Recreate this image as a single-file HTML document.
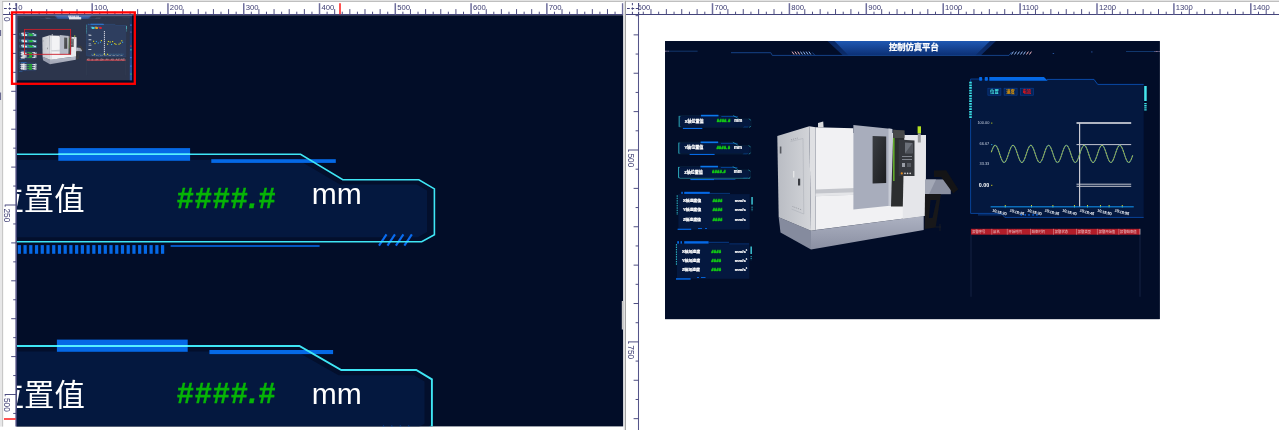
<!DOCTYPE html>
<html lang="zh-CN"><head><meta charset="utf-8"><title>控制仿真平台</title>
<style>html,body{margin:0;padding:0;background:#fff;overflow:hidden}body{width:1279px;height:430px;position:relative}svg{position:absolute;left:0;top:0;display:block;will-change:transform;transform:translateZ(0)}text{font-family:"Liberation Sans","Noto Sans CJK SC",sans-serif;white-space:pre}</style>
</head><body>
<svg width="1279" height="430" viewBox="0 0 1279 430">
<defs>
<linearGradient id="gBan" x1="0" y1="0" x2="0" y2="1"><stop offset="0" stop-color="#1f58b2"/><stop offset="1" stop-color="#0c2f74"/></linearGradient>
<linearGradient id="gBase" x1="0" y1="0" x2="0" y2="1"><stop offset="0" stop-color="#adb2c2"/><stop offset="1" stop-color="#8a8fa2"/></linearGradient>
<linearGradient id="gLeft" x1="0" y1="0" x2="1" y2="0"><stop offset="0" stop-color="#b9bcc3"/><stop offset="1" stop-color="#d3d5d9"/></linearGradient>
<linearGradient id="gWin" x1="0" y1="0" x2="1" y2="1"><stop offset="0" stop-color="#3a3d42"/><stop offset="1" stop-color="#1c1d20"/></linearGradient>
<filter id="soft" x="0" y="0" width="1" height="1" color-interpolation-filters="sRGB"><feGaussianBlur stdDeviation="0.3"/></filter>
<linearGradient id="gStrip" x1="0" y1="0" x2="0" y2="1"><stop offset="0" stop-color="#1c3058"/><stop offset="0.45" stop-color="#22407a"/><stop offset="1" stop-color="#2c5aa6"/></linearGradient>
<clipPath id="clipL"><rect x="16.6" y="15.2" width="606.7" height="411.1"/></clipPath>
<clipPath id="clipT"><rect x="16.6" y="15.3" width="115.4" height="65.3"/></clipPath>
<g id="ppb">
<polygon points="-106,154 300.6,154 342.8,179.4 418.9,179.4 434.4,188.6 434.4,234.5 421.7,241.5 -106,241.5" fill="#030f2c"/>
<polygon points="-101,159.8 298,159.8 340,184.6 416.8,184.6 427,190.6 427,232 417.8,237.3 -101,237.3" fill="#04183f"/>
<rect x="58.3" y="148.1" width="131.8" height="12.7" fill="#0569e6"/>
<rect x="211.3" y="159.2" width="124.5" height="3.7" fill="#0569e6"/>
<line x1="379" y1="245.6" x2="386.5" y2="234.3" stroke="#0a6cf0" stroke-width="2.1"/>
<line x1="387.45" y1="245.6" x2="394.95" y2="234.3" stroke="#0a6cf0" stroke-width="2.1"/>
<line x1="395.9" y1="245.6" x2="403.4" y2="234.3" stroke="#0a6cf0" stroke-width="2.1"/>
<line x1="404.35" y1="245.6" x2="411.85" y2="234.3" stroke="#0a6cf0" stroke-width="2.1"/>
</g>
<g id="ppo" transform="translate(0,0.3)">
<polygon points="-106,154 300.6,154 342.8,179.4 418.9,179.4 434.4,188.6 434.4,234.5 421.7,241.5 -106,241.5" fill="none" stroke="#3fe6f5" stroke-width="1.6" stroke-linejoin="miter"/>
<line x1="58.3" y1="154" x2="190.1" y2="154" stroke="#58efff" stroke-width="1.6"/>
</g>
<g id="pp"><use href="#ppb"/><use href="#ppo"/></g>
<g id="ppb2">
<polygon points="-106,346 299.4,346 341.25,370 416.25,370 431.9,379.4 431.9,426.2 419.4,433.2 -106,433.2" fill="#030f2c"/>
<polygon points="-101,351.6 296.8,351.6 338.5,375.2 414.2,375.2 424.5,381.4 424.5,423.8 415.4,429 -101,429" fill="#04183f"/>
<rect x="56.9" y="339.6" width="130.8" height="12.2" fill="#0569e6"/>
<rect x="209.4" y="350" width="123.7" height="4.1" fill="#0569e6"/>
<line x1="376.6" y1="437.3" x2="384.1" y2="426" stroke="#0a6cf0" stroke-width="2.1"/>
<line x1="385.05" y1="437.3" x2="392.55" y2="426" stroke="#0a6cf0" stroke-width="2.1"/>
<line x1="393.5" y1="437.3" x2="401" y2="426" stroke="#0a6cf0" stroke-width="2.1"/>
<line x1="401.95" y1="437.3" x2="409.45" y2="426" stroke="#0a6cf0" stroke-width="2.1"/>
</g>
<g id="ppo2" transform="translate(0,0)">
<polygon points="-106,346 299.4,346 341.25,370 416.25,370 431.9,379.4 431.9,426.2 419.4,433.2 -106,433.2" fill="none" stroke="#3fe6f5" stroke-width="1.9" stroke-linejoin="miter"/>
<line x1="56.9" y1="346" x2="187.7" y2="346" stroke="#58efff" stroke-width="1.9"/>
</g>
<g id="pp2"><use href="#ppb2"/><use href="#ppo2"/></g>
<g id="dash">
<rect x="0" y="0" width="494.6" height="278" fill="#020d28"/>
<polygon points="162.3,0 330.9,0 315.9,14.2 177.6,14.2" fill="#0b2a66"/>
<polygon points="169.4,0 324.9,0 310.4,14.2 183.2,14.2" fill="url(#gBan)"/>
<polyline points="65.9,11.6 105.7,11.6 107.2,14.3 149.9,14.3 343.9,14.3 346.5,11" fill="none" stroke="#1b4f9e" stroke-width="0.8"/>
<line x1="0" y1="10.1" x2="32.5" y2="10.1" stroke="#1a4a8c" stroke-width="0.7"/>
<line x1="0" y1="10.1" x2="3.5" y2="10.1" stroke="#e8a0a8" stroke-width="0.7" stroke-dasharray="0.8 0.6"/>
<line x1="460.9" y1="10.4" x2="494.6" y2="10.4" stroke="#1a4a8c" stroke-width="0.7"/>
<line x1="489.5" y1="10.4" x2="494.6" y2="10.4" stroke="#e8a0a8" stroke-width="0.7" stroke-dasharray="0.8 0.6"/>
<line x1="127" y1="10.5" x2="128.9" y2="13.4" stroke="#eeb4c0" stroke-width="1"/>
<line x1="129.8" y1="10.5" x2="131.7" y2="13.4" stroke="#eeb4c0" stroke-width="1"/>
<line x1="132.6" y1="10.5" x2="134.5" y2="13.4" stroke="#eeb4c0" stroke-width="1"/>
<line x1="135.4" y1="10.5" x2="137.3" y2="13.4" stroke="#8fb4ee" stroke-width="1"/>
<line x1="138.2" y1="10.5" x2="140.1" y2="13.4" stroke="#8fb4ee" stroke-width="1"/>
<line x1="141" y1="10.5" x2="142.9" y2="13.4" stroke="#8fb4ee" stroke-width="1"/>
<line x1="143.8" y1="10.5" x2="145.7" y2="13.4" stroke="#8fb4ee" stroke-width="1"/>
<line x1="346.4" y1="13.4" x2="348.3" y2="10.5" stroke="#8fb4ee" stroke-width="1"/>
<line x1="349.4" y1="13.4" x2="351.3" y2="10.5" stroke="#8fb4ee" stroke-width="1"/>
<line x1="352.4" y1="13.4" x2="354.3" y2="10.5" stroke="#8fb4ee" stroke-width="1"/>
<line x1="355.4" y1="13.4" x2="357.3" y2="10.5" stroke="#8fb4ee" stroke-width="1"/>
<line x1="358.4" y1="13.4" x2="360.3" y2="10.5" stroke="#8fb4ee" stroke-width="1"/>
<line x1="361.4" y1="13.4" x2="363.3" y2="10.5" stroke="#eeb4c0" stroke-width="1"/>
<line x1="364.4" y1="13.4" x2="366.3" y2="10.5" stroke="#eeb4c0" stroke-width="1"/>
<line x1="147.2" y1="11.4" x2="149.9" y2="14.3" stroke="#1b4f9e" stroke-width="0.8"/>
<rect x="387.6" y="12" width="1.4" height="0.9" fill="#2a5aa8"/>
<rect x="426" y="10.4" width="1.4" height="0.9" fill="#2a5aa8"/>
<text x="248.7" y="8.7" font-size="8.3" fill="#ffffff" font-weight="bold" text-anchor="middle" stroke="#ffffff" stroke-width="0.25">控制仿真平台</text>
<g transform="translate(0,0)">
<use href="#ppb" transform="scale(0.133227) translate(210.5,404.8)"/>
<use href="#ppo" transform="scale(0.133227) translate(210.5,404.8)" opacity="0.35"/>
<rect x="13.65" y="74.9" width="0.8" height="10.8" fill="#35c8d8"/>
<rect x="14.45" y="74.9" width="0.95" height="0.6" fill="#2a9aa8"/>
<rect x="14.45" y="85.1" width="0.95" height="0.6" fill="#2a9aa8"/>
<line x1="68" y1="74.3" x2="73.6" y2="77.7" stroke="#3fe6f5" stroke-width="0.6" opacity="0.7"/>
<line x1="83.7" y1="77.8" x2="85.8" y2="79.1" stroke="#3fe6f5" stroke-width="0.6" opacity="0.7"/>
<line x1="85.8" y1="85.2" x2="84" y2="86.3" stroke="#3fe6f5" stroke-width="0.6" opacity="0.7"/>
<text x="19.6" y="81.5" font-size="4.05" fill="#ffffff" font-weight="bold" stroke="#ffffff" stroke-width="0.22">X轴位置值</text>
<text x="51.6" y="81.4" font-size="4.1" fill="#14cc14" font-weight="bold" font-style="italic" letter-spacing="0.2" stroke="#14cc14" stroke-width="0.3">####.#</text>
<text x="69.2" y="81.4" font-size="4.5" fill="#ffffff" font-weight="bold" stroke="#ffffff" stroke-width="0.22">mm</text>
</g>
<g transform="translate(-0.3,26.7)">
<use href="#ppb" transform="scale(0.133227) translate(210.5,404.8)"/>
<use href="#ppo" transform="scale(0.133227) translate(210.5,404.8)" opacity="0.35"/>
<rect x="13.65" y="74.9" width="0.8" height="10.8" fill="#35c8d8"/>
<rect x="14.45" y="74.9" width="0.95" height="0.6" fill="#2a9aa8"/>
<rect x="14.45" y="85.1" width="0.95" height="0.6" fill="#2a9aa8"/>
<line x1="68" y1="74.3" x2="73.6" y2="77.7" stroke="#3fe6f5" stroke-width="0.6" opacity="0.7"/>
<line x1="83.7" y1="77.8" x2="85.8" y2="79.1" stroke="#3fe6f5" stroke-width="0.6" opacity="0.7"/>
<line x1="85.8" y1="85.2" x2="84" y2="86.3" stroke="#3fe6f5" stroke-width="0.6" opacity="0.7"/>
<text x="19.6" y="81.5" font-size="4.05" fill="#ffffff" font-weight="bold" stroke="#ffffff" stroke-width="0.22">Y轴位置值</text>
<text x="51.6" y="81.4" font-size="4.1" fill="#14cc14" font-weight="bold" font-style="italic" letter-spacing="0.2" stroke="#14cc14" stroke-width="0.3">####.#</text>
<text x="69.2" y="81.4" font-size="4.5" fill="#ffffff" font-weight="bold" stroke="#ffffff" stroke-width="0.22">mm</text>
</g>
<g transform="translate(-0.5,51)">
<use href="#ppb" transform="scale(0.133227) translate(210.5,404.8)"/>
<use href="#ppo" transform="scale(0.133227) translate(210.5,404.8)" opacity="0.35"/>
<rect x="13.65" y="74.9" width="0.8" height="10.8" fill="#35c8d8"/>
<rect x="14.45" y="74.9" width="0.95" height="0.6" fill="#2a9aa8"/>
<rect x="14.45" y="85.1" width="0.95" height="0.6" fill="#2a9aa8"/>
<line x1="68" y1="74.3" x2="73.6" y2="77.7" stroke="#3fe6f5" stroke-width="0.6" opacity="0.7"/>
<line x1="83.7" y1="77.8" x2="85.8" y2="79.1" stroke="#3fe6f5" stroke-width="0.6" opacity="0.7"/>
<line x1="85.8" y1="85.2" x2="84" y2="86.3" stroke="#3fe6f5" stroke-width="0.6" opacity="0.7"/>
<text x="19.6" y="81.5" font-size="4.05" fill="#ffffff" font-weight="bold" stroke="#ffffff" stroke-width="0.22">Z轴位置值</text>
<text x="47.5" y="81.4" font-size="4.1" fill="#14cc14" font-weight="bold" font-style="italic" letter-spacing="0.2" stroke="#14cc14" stroke-width="0.3">####.#</text>
<text x="69.2" y="81.4" font-size="4.5" fill="#ffffff" font-weight="bold" stroke="#ffffff" stroke-width="0.22">mm</text>
</g>
<rect x="17.8" y="86.8" width="19.4" height="1.1" fill="#0569e6"/>
<rect x="24.5" y="112.8" width="25" height="1.1" fill="#0569e6"/>
<rect x="25.3" y="137.9" width="23.7" height="1.1" fill="#0569e6"/>
<rect x="49" y="138" width="21.3" height="0.8" fill="#0a4aa8"/>
<line x1="14.3" y1="137.2" x2="85" y2="137.2" stroke="#2a9aa8" stroke-width="0.6"/>
<rect x="13.3" y="153" width="71.3" height="35.5" fill="#04183f"/>
<rect x="16.2" y="150.7" width="1.5" height="2.1" fill="#0569e6"/>
<rect x="19.1" y="150.7" width="25.6" height="2.1" fill="#0569e6"/>
<line x1="44.7" y1="152.3" x2="64.9" y2="152.3" stroke="#0a50b0" stroke-width="0.6"/>
<line x1="12.1" y1="154.2" x2="12.1" y2="173.9" stroke="#2fbfd0" stroke-width="1" stroke-dasharray="1.5 0.9"/>
<rect x="86.3" y="155.9" width="1.3" height="7.6" fill="#45e0ee"/>
<line x1="86.95" y1="165.5" x2="86.95" y2="170" stroke="#2fbfd0" stroke-width="1" stroke-dasharray="1.2 0.8"/>
<text x="17.9" y="161.25" font-size="3.9" fill="#ffffff" font-weight="bold" stroke="#ffffff" stroke-width="0.22">X轴速度值</text>
<text x="47.4" y="161.25" font-size="4.1" fill="#14cc14" font-weight="bold" font-style="italic" letter-spacing="0.2" stroke="#14cc14" stroke-width="0.3">####</text>
<text x="69.7" y="161.1" font-size="4.2" fill="#ffffff" font-weight="bold" stroke="#ffffff" stroke-width="0.22">mm/s</text>
<text x="17.9" y="170.15" font-size="3.9" fill="#ffffff" font-weight="bold" stroke="#ffffff" stroke-width="0.22">Y轴速度值</text>
<text x="47.4" y="170.15" font-size="4.1" fill="#14cc14" font-weight="bold" font-style="italic" letter-spacing="0.2" stroke="#14cc14" stroke-width="0.3">####</text>
<text x="69.7" y="170" font-size="4.2" fill="#ffffff" font-weight="bold" stroke="#ffffff" stroke-width="0.22">mm/s</text>
<text x="17.9" y="179.85" font-size="3.9" fill="#ffffff" font-weight="bold" stroke="#ffffff" stroke-width="0.22">Z轴速度值</text>
<text x="47.4" y="179.85" font-size="4.1" fill="#14cc14" font-weight="bold" font-style="italic" letter-spacing="0.2" stroke="#14cc14" stroke-width="0.3">####</text>
<text x="69.7" y="179.7" font-size="4.2" fill="#ffffff" font-weight="bold" stroke="#ffffff" stroke-width="0.22">mm/s</text>
<rect x="12.5" y="187.6" width="13.6" height="1.2" fill="#0569e6"/>
<rect x="32.9" y="187" width="4" height="0.9" fill="#0569e6"/>
<rect x="39.9" y="187" width="2" height="0.9" fill="#0569e6"/>
<rect x="11.8" y="202.1" width="72.4" height="35.6" fill="#04183f"/>
<rect x="12.1" y="200.1" width="1.8" height="2.4" fill="#0569e6"/>
<rect x="15.4" y="200.1" width="1.5" height="2.4" fill="#0569e6"/>
<rect x="19.1" y="200.1" width="24.4" height="2.4" fill="#0569e6"/>
<line x1="43.5" y1="201.2" x2="63.9" y2="201.2" stroke="#0a5ac8" stroke-width="0.6"/>
<line x1="64.4" y1="202.8" x2="84" y2="202.8" stroke="#0a3a88" stroke-width="0.6"/>
<line x1="11.3" y1="203" x2="11.3" y2="224" stroke="#2fbfd0" stroke-width="1" stroke-dasharray="1.5 0.9"/>
<rect x="85.4" y="205.4" width="1.3" height="7.5" fill="#45e0ee"/>
<line x1="86.05" y1="214.9" x2="86.05" y2="219" stroke="#2fbfd0" stroke-width="1" stroke-dasharray="1.2 0.8"/>
<text x="16.8" y="212.05" font-size="3.9" fill="#ffffff" font-weight="bold" stroke="#ffffff" stroke-width="0.22">X轴加速度</text>
<text x="46.2" y="212.05" font-size="4.1" fill="#14cc14" font-weight="bold" font-style="italic" letter-spacing="0.2" stroke="#14cc14" stroke-width="0.3">####</text>
<text x="69.7" y="211.9" font-size="4.2" fill="#ffffff" font-weight="bold" stroke="#ffffff" stroke-width="0.22">mm/s²</text>
<text x="16.8" y="220.75" font-size="3.9" fill="#ffffff" font-weight="bold" stroke="#ffffff" stroke-width="0.22">Y轴加速度</text>
<text x="46.2" y="220.75" font-size="4.1" fill="#14cc14" font-weight="bold" font-style="italic" letter-spacing="0.2" stroke="#14cc14" stroke-width="0.3">####</text>
<text x="69.7" y="220.6" font-size="4.2" fill="#ffffff" font-weight="bold" stroke="#ffffff" stroke-width="0.22">mm/s²</text>
<text x="16.8" y="230.05" font-size="3.9" fill="#ffffff" font-weight="bold" stroke="#ffffff" stroke-width="0.22">Z轴加速度</text>
<text x="46.2" y="230.05" font-size="4.1" fill="#14cc14" font-weight="bold" font-style="italic" letter-spacing="0.2" stroke="#14cc14" stroke-width="0.3">####</text>
<text x="69.7" y="229.9" font-size="4.2" fill="#ffffff" font-weight="bold" stroke="#ffffff" stroke-width="0.22">mm/s²</text>
<rect x="10.9" y="237.1" width="14.6" height="1.5" fill="#0569e6"/>
<rect x="31.9" y="236" width="2" height="0.9" fill="#0569e6"/>
<rect x="35.9" y="236" width="4.5" height="0.9" fill="#0569e6"/>
<g transform="translate(-665.1,-41.1)">
<polygon points="778.7,217.3 811,230.7 811,249.6 780.5,232.5" fill="#858b9e"/>
<polygon points="811,230.7 923.7,216 923.7,230 811,249.6" fill="url(#gBase)"/>
<polygon points="777.3,135.9 809.3,126.3 811,230.7 778.7,217.3" fill="url(#gLeft)"/>
<polygon points="809.3,126.3 815.7,127.3 815.7,230.1 811,230.7" fill="#dfe0e3"/>
<polygon points="815.7,127.3 853.4,128.3 853.4,133 904,133 904.5,135 926,135 925.4,215.8 815.7,230.1" fill="#f1f1f3"/>
<polygon points="904.5,135 926,135 925.4,215.8 902.8,218.7 902.8,206.4" fill="#e5e6ea"/>
<polygon points="815.7,189.4 855.5,188 855.5,194.8 815.7,196.3" fill="#c3c5cb"/>
<polygon points="815.7,193.6 855.5,192.3 855.5,194.8 815.7,196.3" fill="#e4e5e8"/>
<polygon points="818,123 823.2,121.6 823.6,127.5 818,127.4" fill="#d9dadd"/>
<polyline points="790.5,141.5 803,138.5 803.8,214 791.5,209" fill="none" stroke="#a9acb4" stroke-width="0.5"/>
<rect x="798" y="178.7" width="2.2" height="6.8" fill="#3a3c42"/>
<rect x="793.2" y="171" width="1.1" height="6.5" fill="#eceded"/>
<rect x="779.8" y="146.5" width="1.6" height="7" fill="#55585f"/>
<line x1="791" y1="139.8" x2="798" y2="138" stroke="#70737a" stroke-width="0.5" stroke-dasharray="1 1"/>
<line x1="792.5" y1="206.5" x2="802" y2="210" stroke="#70737a" stroke-width="0.5" stroke-dasharray="1 1"/>
<polygon points="853.4,125.1 892.3,129 892.3,205.5 853.4,209.4" fill="#a8adbc"/>
<polygon points="888.5,128.6 892.3,129 892.3,205.5 888.5,205.9" fill="#c6cad4"/>
<polygon points="872.6,135.9 886.2,136.6 886.2,183 872.6,183.6" fill="url(#gWin)"/>
<polygon points="893.2,129.8 904.5,130.5 902.8,206.4 891,206.4" fill="#2c2e2f"/>
<polygon points="893.2,129.8 904.5,130.5 904.4,138 893.1,138" fill="#47494a"/>
<rect x="893" y="138" width="1.6" height="43" fill="#5fa82a"/>
<polygon points="898.7,139.4 914.5,140.5 914.5,176 898.7,176" fill="#35383d"/>
<polygon points="905,142.5 912.6,143 912.6,153.2 905,153.2" fill="#6c7179"/>
<polygon points="905,153.2 912.6,143 912.6,153.2" fill="#50545b"/>
<rect x="902" y="156" width="10" height="1" fill="#7f848c"/>
<rect x="902" y="159" width="10" height="1" fill="#7f848c"/>
<rect x="902" y="163" width="3" height="4" fill="#9a9ea6"/>
<rect x="907" y="163" width="4" height="4" fill="#565a61"/>
<circle cx="901.8" cy="173.4" r="1.1" fill="#e08a20"/>
<circle cx="905" cy="173.4" r="0.8" fill="#d8d8d8"/><circle cx="907.6" cy="173.4" r="0.8" fill="#d8d8d8"/><circle cx="910.2" cy="173.4" r="0.8" fill="#d8d8d8"/>
<rect x="917.6" y="126.3" width="3.4" height="7.2" fill="#b4e222"/>
<rect x="917.8" y="133.5" width="3" height="9" fill="#9b9d9f"/>
<polygon points="925.4,179.4 950.8,179.4 950.8,194.2 925.4,194.2" fill="#8a8fa0"/>
<polygon points="925.4,179.4 936,179.4 929,194.2 925.4,194.2" fill="#a3a8b6"/>
<polygon points="925,194 941,194 935.6,227.4 924.6,229" fill="#18181a"/>
<polygon points="930.5,200 936.5,200 932.5,218 929,218" fill="#020d28"/>
<polygon points="934,170.6 946.2,170.2 958.2,189.3 953.2,193.6 941.2,177 934,177" fill="#141416"/>
<line x1="935.5" y1="227" x2="941" y2="227" stroke="#222" stroke-width="0.6"/>
<line x1="940" y1="224" x2="940" y2="231" stroke="#222" stroke-width="0.6"/>
</g>
<g transform="translate(-665.1,-41.1)">
<polygon points="970.6,79 1094,79 1097.7,84.2 1143.7,84.2 1143.7,217.4 1004.8,217.4 1001.4,213.4 970.6,213.4" fill="#04183f"/>
<polyline points="970.6,119 970.6,213.4 1001.4,213.4 1004.8,217.4 1143.7,217.4" fill="none" stroke="#0a4fb2" stroke-width="0.8"/>
<polyline points="979,79 970.6,79 970.6,82" fill="none" stroke="#0a4fb2" stroke-width="0.7"/>
<polyline points="1047,79.4 1094,79.4 1097.7,84.4 1143.7,84.4" fill="none" stroke="#0a4fb2" stroke-width="0.9"/>
<line x1="978" y1="214.9" x2="1001.4" y2="214.9" stroke="#0a4fb2" stroke-width="0.7"/>
<rect x="979.1" y="76.9" width="3.1" height="3.9" fill="#0569e6" rx="0.8"/>
<rect x="984.7" y="76.9" width="3.2" height="3.9" fill="#0569e6" rx="0.8"/>
<polygon points="989.3,76.9 1043.9,76.9 1047.7,80.8 989.3,80.8" fill="#0569e6"/>
<line x1="970.5" y1="81.8" x2="970.5" y2="119" stroke="#3ce0e8" stroke-width="2.6" stroke-dasharray="1.7 0.95"/>
<rect x="1144.2" y="86" width="2.5" height="15" fill="#45e6ee"/>
<line x1="1145.45" y1="103" x2="1145.45" y2="110.5" stroke="#3ce0e8" stroke-width="2.4" stroke-dasharray="1.3 0.8"/>
<rect x="987.9" y="88.2" width="13" height="7" fill="#052458" stroke="#0b3f94" stroke-width="0.6"/>
<text x="994.4" y="93.3" font-size="4.3" fill="#45e4e4" font-weight="bold" text-anchor="middle">位置</text>
<rect x="1004.1" y="88.2" width="13" height="7" fill="#052458" stroke="#0b3f94" stroke-width="0.6"/>
<text x="1010.6" y="93.3" font-size="4.3" fill="#f2a000" font-weight="bold" text-anchor="middle">速度</text>
<rect x="1020.3" y="88.2" width="13" height="7" fill="#052458" stroke="#0b3f94" stroke-width="0.6"/>
<text x="1026.8" y="93.3" font-size="4.3" fill="#ff1010" font-weight="bold" text-anchor="middle">电流</text>
<text x="989.3" y="124.4" font-size="3.9" fill="#c9d2e2" text-anchor="end">100.00</text>
<text x="989.3" y="144.9" font-size="3.9" fill="#c9d2e2" text-anchor="end">66.67</text>
<text x="989.3" y="165.3" font-size="3.9" fill="#c9d2e2" text-anchor="end">33.33</text>
<text x="989.3" y="186.9" font-size="5.4" fill="#ffffff" text-anchor="end" font-weight="bold">0.00</text>
<rect x="991.2" y="122.6" width="1.1" height="1" fill="#c8d820"/>
<rect x="991.2" y="144.1" width="1.1" height="1" fill="#30b0e0"/>
<rect x="991.2" y="184.8" width="1.1" height="1" fill="#e8e020"/>
<line x1="990.6" y1="206.75" x2="1133.75" y2="206.75" stroke="#0b6cb8" stroke-width="1.5"/>
<rect x="1004.8" y="205" width="0.9" height="1.4" fill="#e6e32a"/>
<rect x="1004.8" y="206.4" width="0.9" height="1" fill="#30c8e8"/>
<rect x="1031.05" y="205" width="0.9" height="1.4" fill="#e6e32a"/>
<rect x="1031.05" y="206.4" width="0.9" height="1" fill="#30c8e8"/>
<rect x="1052.45" y="205" width="0.9" height="1.4" fill="#e6e32a"/>
<rect x="1052.45" y="206.4" width="0.9" height="1" fill="#30c8e8"/>
<rect x="1073.95" y="205" width="0.9" height="1.4" fill="#e6e32a"/>
<rect x="1073.95" y="206.4" width="0.9" height="1" fill="#30c8e8"/>
<rect x="1087.05" y="205" width="0.9" height="1.4" fill="#e6e32a"/>
<rect x="1087.05" y="206.4" width="0.9" height="1" fill="#30c8e8"/>
<rect x="1099.95" y="205" width="0.9" height="1.4" fill="#e6e32a"/>
<rect x="1099.95" y="206.4" width="0.9" height="1" fill="#30c8e8"/>
<rect x="1108.65" y="205" width="0.9" height="1.4" fill="#e6e32a"/>
<rect x="1108.65" y="206.4" width="0.9" height="1" fill="#30c8e8"/>
<rect x="1121.8" y="205" width="0.9" height="1.4" fill="#e6e32a"/>
<rect x="1121.8" y="206.4" width="0.9" height="1" fill="#30c8e8"/>
<text transform="translate(991.9,211.6) rotate(14)" font-size="3.8" fill="#eef1f6" stroke="#eef1f6" stroke-width="0.12">10:15:20</text>
<text transform="translate(1009.4,211.6) rotate(14)" font-size="3.8" fill="#eef1f6" stroke="#eef1f6" stroke-width="0.12">10:15:25</text>
<text transform="translate(1026.9,211.6) rotate(14)" font-size="3.8" fill="#eef1f6" stroke="#eef1f6" stroke-width="0.12">10:15:30</text>
<text transform="translate(1044.4,211.6) rotate(14)" font-size="3.8" fill="#eef1f6" stroke="#eef1f6" stroke-width="0.12">10:15:35</text>
<text transform="translate(1061.9,211.6) rotate(14)" font-size="3.8" fill="#eef1f6" stroke="#eef1f6" stroke-width="0.12">10:15:40</text>
<text transform="translate(1079.4,211.6) rotate(14)" font-size="3.8" fill="#eef1f6" stroke="#eef1f6" stroke-width="0.12">10:15:45</text>
<text transform="translate(1096.9,211.6) rotate(14)" font-size="3.8" fill="#eef1f6" stroke="#eef1f6" stroke-width="0.12">10:15:50</text>
<text transform="translate(1114.4,211.6) rotate(14)" font-size="3.8" fill="#eef1f6" stroke="#eef1f6" stroke-width="0.12">10:15:55</text>
<rect x="1020.5" y="214.2" width="1.5" height="1.4" fill="#0a6cf0"/>
<rect x="1024.5" y="214.2" width="1.5" height="1.4" fill="#0a6cf0"/>
<rect x="1028.25" y="214.2" width="1.5" height="1.4" fill="#0a6cf0"/>
<rect x="1032.35" y="214.2" width="1.5" height="1.4" fill="#0a6cf0"/>
<rect x="1036.15" y="214.2" width="1.5" height="1.4" fill="#0a6cf0"/>
<rect x="970.9" y="228.8" width="169.1" height="5.9" fill="#b21d29"/>
<text x="972.2" y="233" font-size="3.3" fill="#ecc3c7">报警序号</text>
<line x1="991.8" y1="228.8" x2="991.8" y2="234.7" stroke="#e7a6ab" stroke-width="0.5"/>
<text x="993.1" y="233" font-size="3.3" fill="#ecc3c7">品名</text>
<line x1="1007.3" y1="228.8" x2="1007.3" y2="234.7" stroke="#e7a6ab" stroke-width="0.5"/>
<text x="1008.6" y="233" font-size="3.3" fill="#ecc3c7">开始时间</text>
<line x1="1030.5" y1="228.8" x2="1030.5" y2="234.7" stroke="#e7a6ab" stroke-width="0.5"/>
<text x="1031.8" y="233" font-size="3.3" fill="#ecc3c7">结束时间</text>
<line x1="1053.5" y1="228.8" x2="1053.5" y2="234.7" stroke="#e7a6ab" stroke-width="0.5"/>
<text x="1054.8" y="233" font-size="3.3" fill="#ecc3c7">报警状态</text>
<line x1="1076.5" y1="228.8" x2="1076.5" y2="234.7" stroke="#e7a6ab" stroke-width="0.5"/>
<text x="1077.8" y="233" font-size="3.3" fill="#ecc3c7">报警类型</text>
<line x1="1097.4" y1="228.8" x2="1097.4" y2="234.7" stroke="#e7a6ab" stroke-width="0.5"/>
<text x="1098.7" y="233" font-size="3.3" fill="#ecc3c7">报警开始值</text>
<line x1="1118.8" y1="228.8" x2="1118.8" y2="234.7" stroke="#e7a6ab" stroke-width="0.5"/>
<text x="1120.1" y="233" font-size="3.3" fill="#ecc3c7">报警结束值</text>
<line x1="1140" y1="228.8" x2="1140" y2="234.7" stroke="#f0e0e2" stroke-width="0.6"/>
<line x1="971" y1="234.7" x2="971" y2="296.8" stroke="#1d2d4e" stroke-width="0.7"/>
<line x1="1140" y1="234.7" x2="1140" y2="296.8" stroke="#1d2d4e" stroke-width="0.7"/>
</g>
</g>
<g id="curves" transform="translate(-665.1,-41.1)">
<line x1="1076.5" y1="123.1" x2="1131.2" y2="123.1" stroke="#e9e9ee" stroke-width="1.5"/>
<line x1="1076.5" y1="144.6" x2="1131.2" y2="144.6" stroke="#d9d9e0" stroke-width="0.9"/>
<line x1="1076.5" y1="184.2" x2="1131.2" y2="184.2" stroke="#d9d9e0" stroke-width="0.9"/>
<line x1="1076.5" y1="186.3" x2="1131.2" y2="186.3" stroke="#d9d9e0" stroke-width="0.9"/>
<line x1="1079.6" y1="123" x2="1079.6" y2="206.6" stroke="#c9c9d2" stroke-width="1.2"/>
<polyline points="991.3,152.24 992,150.23 992.7,148.44 993.4,146.98 994.1,145.94 994.8,145.39 995.5,145.35 996.2,145.83 996.9,146.8 997.6,148.21 998.3,149.96 999,151.94 999.7,154.05 1000.4,156.15 1001.1,158.11 1001.8,159.82 1002.5,161.16 1003.2,162.07 1003.9,162.48 1004.6,162.37 1005.3,161.74 1006,160.64 1006.7,159.13 1007.4,157.3 1008.1,155.26 1008.8,153.14 1009.5,151.07 1010.2,149.17 1010.9,147.56 1011.6,146.33 1012.3,145.56 1013,145.3 1013.7,145.56 1014.4,146.33 1015.1,147.56 1015.8,149.17 1016.5,151.07 1017.2,153.14 1017.9,155.26 1018.6,157.3 1019.3,159.13 1020,160.64 1020.7,161.74 1021.4,162.37 1022.1,162.48 1022.8,162.07 1023.5,161.16 1024.2,159.82 1024.9,158.11 1025.6,156.15 1026.3,154.05 1027,151.94 1027.7,149.96 1028.4,148.21 1029.1,146.8 1029.8,145.83 1030.5,145.35 1031.2,145.39 1031.9,145.94 1032.6,146.98 1033.3,148.44 1034,150.23 1034.7,152.24 1035.4,154.36 1036.1,156.44 1036.8,158.37 1037.5,160.03 1038.2,161.32 1038.9,162.16 1039.6,162.49 1040.3,162.31 1041,161.61 1041.7,160.44 1042.4,158.88 1043.1,157.02 1043.8,154.96 1044.5,152.84 1045.2,150.78 1045.9,148.92 1046.6,147.36 1047.3,146.19 1048,145.49 1048.7,145.31 1049.4,145.64 1050.1,146.48 1050.8,147.77 1051.5,149.43 1052.2,151.36 1052.9,153.44 1053.6,155.56 1054.3,157.57 1055,159.36 1055.7,160.82 1056.4,161.86 1057.1,162.41 1057.8,162.45 1058.5,161.97 1059.2,161 1059.9,159.59 1060.6,157.84 1061.3,155.86 1062,153.75 1062.7,151.65 1063.4,149.69 1064.1,147.98 1064.8,146.64 1065.5,145.73 1066.2,145.32 1066.9,145.43 1067.6,146.06 1068.3,147.16 1069,148.67 1069.7,150.5 1070.4,152.54 1071.1,154.66 1071.8,156.73 1072.5,158.63 1073.2,160.24 1073.9,161.47 1074.6,162.24 1075.3,162.5 1076,162.24 1076.7,161.47 1077.4,160.24 1078.1,158.63 1078.8,156.73 1079.5,154.66 1080.2,152.54 1080.9,150.5 1081.6,148.67 1082.3,147.16 1083,146.06 1083.7,145.43 1084.4,145.32 1085.1,145.73 1085.8,146.64 1086.5,147.98 1087.2,149.69 1087.9,151.65 1088.6,153.75 1089.3,155.86 1090,157.84 1090.7,159.59 1091.4,161 1092.1,161.97 1092.8,162.45 1093.5,162.41 1094.2,161.86 1094.9,160.82 1095.6,159.36 1096.3,157.57 1097,155.56 1097.7,153.44 1098.4,151.36 1099.1,149.43 1099.8,147.77 1100.5,146.48 1101.2,145.64 1101.9,145.31 1102.6,145.49 1103.3,146.19 1104,147.36 1104.7,148.92 1105.4,150.78 1106.1,152.84 1106.8,154.96 1107.5,157.02 1108.2,158.88 1108.9,160.44 1109.6,161.61 1110.3,162.31 1111,162.49 1111.7,162.16 1112.4,161.32 1113.1,160.03 1113.8,158.37 1114.5,156.44 1115.2,154.36 1115.9,152.24 1116.6,150.23 1117.3,148.44 1118,146.98 1118.7,145.94 1119.4,145.39 1120.1,145.35 1120.8,145.83 1121.5,146.8 1122.2,148.21 1122.9,149.96 1123.6,151.94 1124.3,154.05 1125,156.15 1125.7,158.11 1126.4,159.82 1127.1,161.16 1127.8,162.07 1128.5,162.48 1129.2,162.37 1129.9,161.74 1130.6,160.64 1131.3,159.13 1132,157.3 1132.7,155.26" fill="none" stroke="#1f7fd0" stroke-width="1.1" opacity="0.75"/>
<polyline points="991.3,152.24 992,150.23 992.7,148.44 993.4,146.98 994.1,145.94 994.8,145.39 995.5,145.35 996.2,145.83 996.9,146.8 997.6,148.21 998.3,149.96 999,151.94 999.7,154.05 1000.4,156.15 1001.1,158.11 1001.8,159.82 1002.5,161.16 1003.2,162.07 1003.9,162.48 1004.6,162.37 1005.3,161.74 1006,160.64 1006.7,159.13 1007.4,157.3 1008.1,155.26 1008.8,153.14 1009.5,151.07 1010.2,149.17 1010.9,147.56 1011.6,146.33 1012.3,145.56 1013,145.3 1013.7,145.56 1014.4,146.33 1015.1,147.56 1015.8,149.17 1016.5,151.07 1017.2,153.14 1017.9,155.26 1018.6,157.3 1019.3,159.13 1020,160.64 1020.7,161.74 1021.4,162.37 1022.1,162.48 1022.8,162.07 1023.5,161.16 1024.2,159.82 1024.9,158.11 1025.6,156.15 1026.3,154.05 1027,151.94 1027.7,149.96 1028.4,148.21 1029.1,146.8 1029.8,145.83 1030.5,145.35 1031.2,145.39 1031.9,145.94 1032.6,146.98 1033.3,148.44 1034,150.23 1034.7,152.24 1035.4,154.36 1036.1,156.44 1036.8,158.37 1037.5,160.03 1038.2,161.32 1038.9,162.16 1039.6,162.49 1040.3,162.31 1041,161.61 1041.7,160.44 1042.4,158.88 1043.1,157.02 1043.8,154.96 1044.5,152.84 1045.2,150.78 1045.9,148.92 1046.6,147.36 1047.3,146.19 1048,145.49 1048.7,145.31 1049.4,145.64 1050.1,146.48 1050.8,147.77 1051.5,149.43 1052.2,151.36 1052.9,153.44 1053.6,155.56 1054.3,157.57 1055,159.36 1055.7,160.82 1056.4,161.86 1057.1,162.41 1057.8,162.45 1058.5,161.97 1059.2,161 1059.9,159.59 1060.6,157.84 1061.3,155.86 1062,153.75 1062.7,151.65 1063.4,149.69 1064.1,147.98 1064.8,146.64 1065.5,145.73 1066.2,145.32 1066.9,145.43 1067.6,146.06 1068.3,147.16 1069,148.67 1069.7,150.5 1070.4,152.54 1071.1,154.66 1071.8,156.73 1072.5,158.63 1073.2,160.24 1073.9,161.47 1074.6,162.24 1075.3,162.5 1076,162.24 1076.7,161.47 1077.4,160.24 1078.1,158.63 1078.8,156.73 1079.5,154.66 1080.2,152.54 1080.9,150.5 1081.6,148.67 1082.3,147.16 1083,146.06 1083.7,145.43 1084.4,145.32 1085.1,145.73 1085.8,146.64 1086.5,147.98 1087.2,149.69 1087.9,151.65 1088.6,153.75 1089.3,155.86 1090,157.84 1090.7,159.59 1091.4,161 1092.1,161.97 1092.8,162.45 1093.5,162.41 1094.2,161.86 1094.9,160.82 1095.6,159.36 1096.3,157.57 1097,155.56 1097.7,153.44 1098.4,151.36 1099.1,149.43 1099.8,147.77 1100.5,146.48 1101.2,145.64 1101.9,145.31 1102.6,145.49 1103.3,146.19 1104,147.36 1104.7,148.92 1105.4,150.78 1106.1,152.84 1106.8,154.96 1107.5,157.02 1108.2,158.88 1108.9,160.44 1109.6,161.61 1110.3,162.31 1111,162.49 1111.7,162.16 1112.4,161.32 1113.1,160.03 1113.8,158.37 1114.5,156.44 1115.2,154.36 1115.9,152.24 1116.6,150.23 1117.3,148.44 1118,146.98 1118.7,145.94 1119.4,145.39 1120.1,145.35 1120.8,145.83 1121.5,146.8 1122.2,148.21 1122.9,149.96 1123.6,151.94 1124.3,154.05 1125,156.15 1125.7,158.11 1126.4,159.82 1127.1,161.16 1127.8,162.07 1128.5,162.48 1129.2,162.37 1129.9,161.74 1130.6,160.64 1131.3,159.13 1132,157.3 1132.7,155.26" fill="none" stroke="#ece41c" stroke-width="0.75" stroke-dasharray="2.4 0.5"/>
</g>
</defs>
<rect x="0" y="0" width="1279" height="430" fill="#ffffff"/>
<rect x="16.6" y="15.2" width="606.7" height="411.2" fill="#020d28"/>
<g clip-path="url(#clipL)">
<use href="#pp"/>
<use href="#pp2"/>
<rect x="161" y="245.1" width="3.2" height="8.7" fill="#0569e6"/>
<rect x="155.27" y="245.1" width="3.2" height="8.7" fill="#0569e6"/>
<rect x="149.54" y="245.1" width="3.2" height="8.7" fill="#0569e6"/>
<rect x="143.81" y="245.1" width="3.2" height="8.7" fill="#0569e6"/>
<rect x="138.08" y="245.1" width="3.2" height="8.7" fill="#0569e6"/>
<rect x="132.35" y="245.1" width="3.2" height="8.7" fill="#0569e6"/>
<rect x="126.62" y="245.1" width="3.2" height="8.7" fill="#0569e6"/>
<rect x="120.89" y="245.1" width="3.2" height="8.7" fill="#0569e6"/>
<rect x="115.16" y="245.1" width="3.2" height="8.7" fill="#0569e6"/>
<rect x="109.43" y="245.1" width="3.2" height="8.7" fill="#0569e6"/>
<rect x="103.7" y="245.1" width="3.2" height="8.7" fill="#0569e6"/>
<rect x="97.97" y="245.1" width="3.2" height="8.7" fill="#0569e6"/>
<rect x="92.24" y="245.1" width="3.2" height="8.7" fill="#0569e6"/>
<rect x="86.51" y="245.1" width="3.2" height="8.7" fill="#0569e6"/>
<rect x="80.78" y="245.1" width="3.2" height="8.7" fill="#0569e6"/>
<rect x="75.05" y="245.1" width="3.2" height="8.7" fill="#0569e6"/>
<rect x="69.32" y="245.1" width="3.2" height="8.7" fill="#0569e6"/>
<rect x="63.59" y="245.1" width="3.2" height="8.7" fill="#0569e6"/>
<rect x="57.86" y="245.1" width="3.2" height="8.7" fill="#0569e6"/>
<rect x="52.13" y="245.1" width="3.2" height="8.7" fill="#0569e6"/>
<rect x="46.4" y="245.1" width="3.2" height="8.7" fill="#0569e6"/>
<rect x="40.67" y="245.1" width="3.2" height="8.7" fill="#0569e6"/>
<rect x="34.94" y="245.1" width="3.2" height="8.7" fill="#0569e6"/>
<rect x="29.21" y="245.1" width="3.2" height="8.7" fill="#0569e6"/>
<rect x="23.48" y="245.1" width="3.2" height="8.7" fill="#0569e6"/>
<rect x="17.75" y="245.1" width="3.2" height="8.7" fill="#0569e6"/>
<rect x="12.02" y="245.1" width="3.2" height="8.7" fill="#0569e6"/>
<rect x="170.6" y="245.2" width="149" height="1.6" fill="#0569e6"/>
<text x="84.6" y="209.9" font-size="30.4" fill="#ffffff" text-anchor="end">X轴位置值</text>
<text x="176.6" y="208.1" font-size="30" fill="#06b406" font-weight="bold" font-style="italic" letter-spacing="1.3" stroke="#06b406" stroke-width="0.3">####.#</text>
<text x="311.7" y="204" font-size="30" fill="#ffffff">mm</text>
<text x="84.9" y="406.2" font-size="30.4" fill="#ffffff" text-anchor="end">Y轴位置值</text>
<text x="176.6" y="403.4" font-size="30" fill="#06b406" font-weight="bold" font-style="italic" letter-spacing="1.3" stroke="#06b406" stroke-width="0.3">####.#</text>
<text x="311.7" y="403.5" font-size="30" fill="#ffffff">mm</text>
</g>
<g clip-path="url(#clipT)">
<use href="#dash" transform="translate(16.6,15.3) scale(0.229,0.235)"/>
<rect x="16.6" y="15.3" width="115.4" height="65.3" fill="#ffffff" opacity="0.17"/>
<rect x="129.8" y="15.3" width="2.2" height="65.3" fill="url(#gStrip)"/>
<rect x="130" y="24.5" width="1.8" height="1.2" fill="#3a6fd0"/>
<rect x="130" y="31.5" width="1.8" height="1.2" fill="#5a4a8a"/>
<rect x="130" y="45.5" width="1.8" height="1.2" fill="#b03040"/>
<rect x="130" y="49.2" width="1.8" height="1.2" fill="#30a0a0"/>
<rect x="130" y="57" width="1.8" height="1.2" fill="#3a6fd0"/>
<rect x="130" y="65.5" width="1.8" height="1.2" fill="#3a6fd0"/>
<rect x="130" y="73.5" width="1.8" height="1.2" fill="#30a070"/>
<rect x="92" y="27.1" width="2.5" height="1.8" fill="#49dfe6"/>
<rect x="95.5" y="27.1" width="2.4" height="1.8" fill="#f0b020"/>
<rect x="99.3" y="27.1" width="2.4" height="1.8" fill="#f02030"/>
<line x1="104.4" y1="31" x2="104.4" y2="54.8" stroke="#e8eaf0" stroke-width="0.9" stroke-dasharray="1.3 0.7"/>
<rect x="88.6" y="34.95" width="2.8" height="0.9" fill="#dfe3ea" opacity="0.8"/>
<rect x="88.6" y="39.35" width="2.8" height="0.9" fill="#dfe3ea" opacity="0.8"/>
<rect x="88.6" y="44.75" width="2.8" height="0.9" fill="#dfe3ea" opacity="0.8"/>
<rect x="88.6" y="49.05" width="2.8" height="0.9" fill="#dfe3ea" opacity="0.8"/>
<rect x="93.05" y="40.75" width="1.1" height="1.1" fill="#e6df20"/>
<rect x="94.45" y="43.05" width="1.1" height="1.1" fill="#d8d020"/>
<rect x="95.85" y="40.95" width="1.1" height="1.1" fill="#3aa0e8"/>
<rect x="97.75" y="42.45" width="1.1" height="1.1" fill="#3aa0e8"/>
<rect x="99.95" y="41.65" width="1.1" height="1.1" fill="#3aa0e8"/>
<rect x="100.85" y="40.05" width="1.1" height="1.1" fill="#e6df20"/>
<rect x="107.85" y="40.95" width="1.1" height="1.1" fill="#e6df20"/>
<rect x="107.05" y="43.65" width="1.1" height="1.1" fill="#e6df20"/>
<rect x="109.65" y="41.45" width="1.1" height="1.1" fill="#e6df20"/>
<rect x="111.05" y="43.95" width="1.1" height="1.1" fill="#3ab8e8"/>
<rect x="112.05" y="41.05" width="1.1" height="1.1" fill="#e6df20"/>
<rect x="114.25" y="43.05" width="1.1" height="1.1" fill="#e6df20"/>
<rect x="115.45" y="43.85" width="1.1" height="1.1" fill="#d8d020"/>
<rect x="118.45" y="43.65" width="1.1" height="1.1" fill="#e6df20"/>
<rect x="119.75" y="42.65" width="1.1" height="1.1" fill="#e6df20"/>
<rect x="121.25" y="40.25" width="1.1" height="1.1" fill="#e6df20"/>
<rect x="122.05" y="41.75" width="1.1" height="1.1" fill="#3aa0e8"/>
<rect x="93.85" y="53.75" width="1.1" height="1.1" fill="#e6df20"/>
<rect x="103.85" y="53.75" width="1.1" height="1.1" fill="#e6df20"/>
<rect x="107.05" y="53.75" width="1.1" height="1.1" fill="#e6df20"/>
<rect x="21.3" y="33.9" width="15.5" height="2.5" fill="#35b8c8" opacity="0.45"/>
<rect x="22.5" y="34.2" width="4.5" height="1.8" fill="#ffffff" opacity="0.8"/>
<rect x="29.4" y="34.3" width="3.3" height="1.6" fill="#22d022" opacity="0.9"/>
<rect x="33.6" y="34.4" width="2.4" height="1.4" fill="#ffffff" opacity="0.75"/>
<rect x="21.3" y="40.1" width="15.5" height="2.5" fill="#35b8c8" opacity="0.45"/>
<rect x="22.5" y="40.4" width="4.5" height="1.8" fill="#ffffff" opacity="0.8"/>
<rect x="29.4" y="40.5" width="3.3" height="1.6" fill="#22d022" opacity="0.9"/>
<rect x="33.6" y="40.6" width="2.4" height="1.4" fill="#ffffff" opacity="0.75"/>
<rect x="21.3" y="45.3" width="15.5" height="2.5" fill="#35b8c8" opacity="0.45"/>
<rect x="22.5" y="45.6" width="4.5" height="1.8" fill="#ffffff" opacity="0.8"/>
<rect x="29.4" y="45.7" width="3.3" height="1.6" fill="#22d022" opacity="0.9"/>
<rect x="33.6" y="45.8" width="2.4" height="1.4" fill="#ffffff" opacity="0.75"/>
<rect x="22.5" y="52.6" width="4.1" height="1.4" fill="#ffffff" opacity="0.8"/>
<rect x="29.2" y="52.6" width="2.8" height="1.4" fill="#22d022" opacity="0.9"/>
<rect x="33.6" y="52.6" width="2.9" height="1.4" fill="#ffffff" opacity="0.75"/>
<rect x="22.5" y="54.4" width="4.1" height="1.4" fill="#ffffff" opacity="0.8"/>
<rect x="29.2" y="54.4" width="2.8" height="1.4" fill="#22d022" opacity="0.9"/>
<rect x="33.6" y="54.4" width="2.9" height="1.4" fill="#ffffff" opacity="0.75"/>
<rect x="22.5" y="56.2" width="4.1" height="1.4" fill="#ffffff" opacity="0.8"/>
<rect x="29.2" y="56.2" width="2.8" height="1.4" fill="#22d022" opacity="0.9"/>
<rect x="33.6" y="56.2" width="2.9" height="1.4" fill="#ffffff" opacity="0.75"/>
<rect x="22.5" y="64.13" width="4.1" height="1.4" fill="#ffffff" opacity="0.8"/>
<rect x="29.2" y="64.13" width="2.8" height="1.4" fill="#22d022" opacity="0.9"/>
<rect x="33.6" y="64.13" width="2.9" height="1.4" fill="#ffffff" opacity="0.75"/>
<rect x="22.5" y="66.2" width="4.1" height="1.4" fill="#ffffff" opacity="0.8"/>
<rect x="29.2" y="66.2" width="2.8" height="1.4" fill="#22d022" opacity="0.9"/>
<rect x="33.6" y="66.2" width="2.9" height="1.4" fill="#ffffff" opacity="0.75"/>
<rect x="22.5" y="68.27" width="4.1" height="1.4" fill="#ffffff" opacity="0.8"/>
<rect x="29.2" y="68.27" width="2.8" height="1.4" fill="#22d022" opacity="0.9"/>
<rect x="33.6" y="68.27" width="2.9" height="1.4" fill="#ffffff" opacity="0.75"/>
<rect x="69" y="17.1" width="12.2" height="2.3" fill="#ffffff" opacity="0.85"/>
<line x1="16.6" y1="15.6" x2="132" y2="15.6" stroke="#7a84a2" stroke-width="0.9"/>
<line x1="17" y1="15.3" x2="17" y2="80.6" stroke="#5d6785" stroke-width="0.8"/>
</g>
<rect x="24.5" y="29.4" width="46.1" height="24.9" fill="none" stroke="#cc1f2b" stroke-width="0.9"/>
<rect x="3" y="1.9" width="620.6" height="12.1" fill="#ffffff"/>
<rect x="3" y="1.9" width="12.4" height="424.5" fill="#ffffff"/>
<line x1="3" y1="14.45" x2="623.4" y2="14.45" stroke="#45457b" stroke-width="1.15"/>
<text x="18.3" y="9.7" font-size="7.7" fill="#3c3c72">0</text>
<line x1="16.4" y1="3.2" x2="16.4" y2="14.4" stroke="#6d6d9c" stroke-width="1.5"/>
<line x1="23.98" y1="11.7" x2="23.98" y2="14.4" stroke="#45457b" stroke-width="0.95"/>
<line x1="31.56" y1="9.1" x2="31.56" y2="14.4" stroke="#45457b" stroke-width="0.95"/>
<line x1="39.13" y1="11.7" x2="39.13" y2="14.4" stroke="#45457b" stroke-width="0.95"/>
<line x1="46.71" y1="9.1" x2="46.71" y2="14.4" stroke="#45457b" stroke-width="0.95"/>
<line x1="54.29" y1="11.7" x2="54.29" y2="14.4" stroke="#45457b" stroke-width="0.95"/>
<line x1="61.87" y1="9.1" x2="61.87" y2="14.4" stroke="#45457b" stroke-width="0.95"/>
<line x1="69.45" y1="11.7" x2="69.45" y2="14.4" stroke="#45457b" stroke-width="0.95"/>
<line x1="77.02" y1="9.1" x2="77.02" y2="14.4" stroke="#45457b" stroke-width="0.95"/>
<line x1="84.6" y1="11.7" x2="84.6" y2="14.4" stroke="#45457b" stroke-width="0.95"/>
<text x="94.08" y="9.7" font-size="7.7" fill="#3c3c72">100</text>
<line x1="92.18" y1="3.2" x2="92.18" y2="14.4" stroke="#6d6d9c" stroke-width="1.5"/>
<line x1="99.76" y1="11.7" x2="99.76" y2="14.4" stroke="#45457b" stroke-width="0.95"/>
<line x1="107.34" y1="9.1" x2="107.34" y2="14.4" stroke="#45457b" stroke-width="0.95"/>
<line x1="114.91" y1="11.7" x2="114.91" y2="14.4" stroke="#45457b" stroke-width="0.95"/>
<line x1="122.49" y1="9.1" x2="122.49" y2="14.4" stroke="#45457b" stroke-width="0.95"/>
<line x1="130.07" y1="11.7" x2="130.07" y2="14.4" stroke="#45457b" stroke-width="0.95"/>
<line x1="137.65" y1="9.1" x2="137.65" y2="14.4" stroke="#45457b" stroke-width="0.95"/>
<line x1="145.23" y1="11.7" x2="145.23" y2="14.4" stroke="#45457b" stroke-width="0.95"/>
<line x1="152.8" y1="9.1" x2="152.8" y2="14.4" stroke="#45457b" stroke-width="0.95"/>
<line x1="160.38" y1="11.7" x2="160.38" y2="14.4" stroke="#45457b" stroke-width="0.95"/>
<text x="169.86" y="9.7" font-size="7.7" fill="#3c3c72">200</text>
<line x1="167.96" y1="3.2" x2="167.96" y2="14.4" stroke="#6d6d9c" stroke-width="1.5"/>
<line x1="175.54" y1="11.7" x2="175.54" y2="14.4" stroke="#45457b" stroke-width="0.95"/>
<line x1="183.12" y1="9.1" x2="183.12" y2="14.4" stroke="#45457b" stroke-width="0.95"/>
<line x1="190.69" y1="11.7" x2="190.69" y2="14.4" stroke="#45457b" stroke-width="0.95"/>
<line x1="198.27" y1="9.1" x2="198.27" y2="14.4" stroke="#45457b" stroke-width="0.95"/>
<line x1="205.85" y1="11.7" x2="205.85" y2="14.4" stroke="#45457b" stroke-width="0.95"/>
<line x1="213.43" y1="9.1" x2="213.43" y2="14.4" stroke="#45457b" stroke-width="0.95"/>
<line x1="221.01" y1="11.7" x2="221.01" y2="14.4" stroke="#45457b" stroke-width="0.95"/>
<line x1="228.58" y1="9.1" x2="228.58" y2="14.4" stroke="#45457b" stroke-width="0.95"/>
<line x1="236.16" y1="11.7" x2="236.16" y2="14.4" stroke="#45457b" stroke-width="0.95"/>
<text x="245.64" y="9.7" font-size="7.7" fill="#3c3c72">300</text>
<line x1="243.74" y1="3.2" x2="243.74" y2="14.4" stroke="#6d6d9c" stroke-width="1.5"/>
<line x1="251.32" y1="11.7" x2="251.32" y2="14.4" stroke="#45457b" stroke-width="0.95"/>
<line x1="258.9" y1="9.1" x2="258.9" y2="14.4" stroke="#45457b" stroke-width="0.95"/>
<line x1="266.47" y1="11.7" x2="266.47" y2="14.4" stroke="#45457b" stroke-width="0.95"/>
<line x1="274.05" y1="9.1" x2="274.05" y2="14.4" stroke="#45457b" stroke-width="0.95"/>
<line x1="281.63" y1="11.7" x2="281.63" y2="14.4" stroke="#45457b" stroke-width="0.95"/>
<line x1="289.21" y1="9.1" x2="289.21" y2="14.4" stroke="#45457b" stroke-width="0.95"/>
<line x1="296.79" y1="11.7" x2="296.79" y2="14.4" stroke="#45457b" stroke-width="0.95"/>
<line x1="304.36" y1="9.1" x2="304.36" y2="14.4" stroke="#45457b" stroke-width="0.95"/>
<line x1="311.94" y1="11.7" x2="311.94" y2="14.4" stroke="#45457b" stroke-width="0.95"/>
<text x="321.42" y="9.7" font-size="7.7" fill="#3c3c72">400</text>
<line x1="319.52" y1="3.2" x2="319.52" y2="14.4" stroke="#6d6d9c" stroke-width="1.5"/>
<line x1="327.1" y1="11.7" x2="327.1" y2="14.4" stroke="#45457b" stroke-width="0.95"/>
<line x1="334.68" y1="9.1" x2="334.68" y2="14.4" stroke="#45457b" stroke-width="0.95"/>
<line x1="342.25" y1="11.7" x2="342.25" y2="14.4" stroke="#45457b" stroke-width="0.95"/>
<line x1="349.83" y1="9.1" x2="349.83" y2="14.4" stroke="#45457b" stroke-width="0.95"/>
<line x1="357.41" y1="11.7" x2="357.41" y2="14.4" stroke="#45457b" stroke-width="0.95"/>
<line x1="364.99" y1="9.1" x2="364.99" y2="14.4" stroke="#45457b" stroke-width="0.95"/>
<line x1="372.57" y1="11.7" x2="372.57" y2="14.4" stroke="#45457b" stroke-width="0.95"/>
<line x1="380.14" y1="9.1" x2="380.14" y2="14.4" stroke="#45457b" stroke-width="0.95"/>
<line x1="387.72" y1="11.7" x2="387.72" y2="14.4" stroke="#45457b" stroke-width="0.95"/>
<text x="397.2" y="9.7" font-size="7.7" fill="#3c3c72">500</text>
<line x1="395.3" y1="3.2" x2="395.3" y2="14.4" stroke="#6d6d9c" stroke-width="1.5"/>
<line x1="402.88" y1="11.7" x2="402.88" y2="14.4" stroke="#45457b" stroke-width="0.95"/>
<line x1="410.46" y1="9.1" x2="410.46" y2="14.4" stroke="#45457b" stroke-width="0.95"/>
<line x1="418.03" y1="11.7" x2="418.03" y2="14.4" stroke="#45457b" stroke-width="0.95"/>
<line x1="425.61" y1="9.1" x2="425.61" y2="14.4" stroke="#45457b" stroke-width="0.95"/>
<line x1="433.19" y1="11.7" x2="433.19" y2="14.4" stroke="#45457b" stroke-width="0.95"/>
<line x1="440.77" y1="9.1" x2="440.77" y2="14.4" stroke="#45457b" stroke-width="0.95"/>
<line x1="448.35" y1="11.7" x2="448.35" y2="14.4" stroke="#45457b" stroke-width="0.95"/>
<line x1="455.92" y1="9.1" x2="455.92" y2="14.4" stroke="#45457b" stroke-width="0.95"/>
<line x1="463.5" y1="11.7" x2="463.5" y2="14.4" stroke="#45457b" stroke-width="0.95"/>
<text x="472.98" y="9.7" font-size="7.7" fill="#3c3c72">600</text>
<line x1="471.08" y1="3.2" x2="471.08" y2="14.4" stroke="#6d6d9c" stroke-width="1.5"/>
<line x1="478.66" y1="11.7" x2="478.66" y2="14.4" stroke="#45457b" stroke-width="0.95"/>
<line x1="486.24" y1="9.1" x2="486.24" y2="14.4" stroke="#45457b" stroke-width="0.95"/>
<line x1="493.81" y1="11.7" x2="493.81" y2="14.4" stroke="#45457b" stroke-width="0.95"/>
<line x1="501.39" y1="9.1" x2="501.39" y2="14.4" stroke="#45457b" stroke-width="0.95"/>
<line x1="508.97" y1="11.7" x2="508.97" y2="14.4" stroke="#45457b" stroke-width="0.95"/>
<line x1="516.55" y1="9.1" x2="516.55" y2="14.4" stroke="#45457b" stroke-width="0.95"/>
<line x1="524.13" y1="11.7" x2="524.13" y2="14.4" stroke="#45457b" stroke-width="0.95"/>
<line x1="531.7" y1="9.1" x2="531.7" y2="14.4" stroke="#45457b" stroke-width="0.95"/>
<line x1="539.28" y1="11.7" x2="539.28" y2="14.4" stroke="#45457b" stroke-width="0.95"/>
<text x="548.76" y="9.7" font-size="7.7" fill="#3c3c72">700</text>
<line x1="546.86" y1="3.2" x2="546.86" y2="14.4" stroke="#6d6d9c" stroke-width="1.5"/>
<line x1="554.44" y1="11.7" x2="554.44" y2="14.4" stroke="#45457b" stroke-width="0.95"/>
<line x1="562.02" y1="9.1" x2="562.02" y2="14.4" stroke="#45457b" stroke-width="0.95"/>
<line x1="569.59" y1="11.7" x2="569.59" y2="14.4" stroke="#45457b" stroke-width="0.95"/>
<line x1="577.17" y1="9.1" x2="577.17" y2="14.4" stroke="#45457b" stroke-width="0.95"/>
<line x1="584.75" y1="11.7" x2="584.75" y2="14.4" stroke="#45457b" stroke-width="0.95"/>
<line x1="592.33" y1="9.1" x2="592.33" y2="14.4" stroke="#45457b" stroke-width="0.95"/>
<line x1="599.91" y1="11.7" x2="599.91" y2="14.4" stroke="#45457b" stroke-width="0.95"/>
<line x1="607.48" y1="9.1" x2="607.48" y2="14.4" stroke="#45457b" stroke-width="0.95"/>
<line x1="615.06" y1="11.7" x2="615.06" y2="14.4" stroke="#45457b" stroke-width="0.95"/>
<text x="624.54" y="9.7" font-size="7.7" fill="#3c3c72">800</text>
<line x1="622.64" y1="3.2" x2="622.64" y2="14.4" stroke="#6d6d9c" stroke-width="1.5"/>
<line x1="16.1" y1="14.4" x2="16.1" y2="426.4" stroke="#45457b" stroke-width="1.35"/>
<text transform="translate(4.3,16.9) rotate(90)" font-size="8.3" fill="#3c3c72">0</text>
<line x1="13.2" y1="34.45" x2="16.1" y2="34.45" stroke="#45457b" stroke-width="0.95"/>
<line x1="11.2" y1="53.4" x2="16.1" y2="53.4" stroke="#45457b" stroke-width="0.95"/>
<line x1="13.2" y1="72.35" x2="16.1" y2="72.35" stroke="#45457b" stroke-width="0.95"/>
<line x1="11.2" y1="91.3" x2="16.1" y2="91.3" stroke="#45457b" stroke-width="0.95"/>
<line x1="13.2" y1="110.25" x2="16.1" y2="110.25" stroke="#45457b" stroke-width="0.95"/>
<line x1="11.2" y1="129.2" x2="16.1" y2="129.2" stroke="#45457b" stroke-width="0.95"/>
<line x1="13.2" y1="148.15" x2="16.1" y2="148.15" stroke="#45457b" stroke-width="0.95"/>
<line x1="11.2" y1="167.1" x2="16.1" y2="167.1" stroke="#45457b" stroke-width="0.95"/>
<line x1="13.2" y1="186.05" x2="16.1" y2="186.05" stroke="#45457b" stroke-width="0.95"/>
<line x1="4.8" y1="205" x2="16.1" y2="205" stroke="#45457b" stroke-width="0.95"/>
<line x1="5.2" y1="205" x2="5.2" y2="206.8" stroke="#45457b" stroke-width="0.8"/>
<text transform="translate(4.3,208.4) rotate(90)" font-size="8.3" fill="#3c3c72">250</text>
<line x1="13.2" y1="223.95" x2="16.1" y2="223.95" stroke="#45457b" stroke-width="0.95"/>
<line x1="11.2" y1="242.9" x2="16.1" y2="242.9" stroke="#45457b" stroke-width="0.95"/>
<line x1="13.2" y1="261.85" x2="16.1" y2="261.85" stroke="#45457b" stroke-width="0.95"/>
<line x1="11.2" y1="280.8" x2="16.1" y2="280.8" stroke="#45457b" stroke-width="0.95"/>
<line x1="13.2" y1="299.75" x2="16.1" y2="299.75" stroke="#45457b" stroke-width="0.95"/>
<line x1="11.2" y1="318.7" x2="16.1" y2="318.7" stroke="#45457b" stroke-width="0.95"/>
<line x1="13.2" y1="337.65" x2="16.1" y2="337.65" stroke="#45457b" stroke-width="0.95"/>
<line x1="11.2" y1="356.6" x2="16.1" y2="356.6" stroke="#45457b" stroke-width="0.95"/>
<line x1="13.2" y1="375.55" x2="16.1" y2="375.55" stroke="#45457b" stroke-width="0.95"/>
<line x1="4.8" y1="394.5" x2="16.1" y2="394.5" stroke="#45457b" stroke-width="0.95"/>
<line x1="5.2" y1="394.5" x2="5.2" y2="396.3" stroke="#45457b" stroke-width="0.8"/>
<text transform="translate(4.3,397.9) rotate(90)" font-size="8.3" fill="#3c3c72">500</text>
<line x1="13.2" y1="413.45" x2="16.1" y2="413.45" stroke="#45457b" stroke-width="0.95"/>
<rect x="3" y="1.9" width="12.4" height="11.9" fill="#ffffff"/>
<line x1="9.6" y1="3" x2="9.6" y2="14.6" stroke="#45457b" stroke-width="1" stroke-dasharray="2.3 2.1"/>
<line x1="4" y1="8.5" x2="16.4" y2="8.5" stroke="#45457b" stroke-width="1" stroke-dasharray="2.8 1.6"/>
<line x1="16" y1="3" x2="16" y2="14.4" stroke="#45457b" stroke-width="1.1" stroke-dasharray="3.2 1.2"/>
<line x1="4" y1="14.45" x2="16" y2="14.45" stroke="#45457b" stroke-width="1.15" stroke-dasharray="4 1.3"/>
<line x1="340" y1="3.2" x2="340" y2="14.2" stroke="#ff1a1a" stroke-width="1.5"/>
<line x1="4" y1="419" x2="15.6" y2="419" stroke="#ff1a1a" stroke-width="1.5"/>
<rect x="12" y="12.4" width="122.8" height="71.4" fill="none" stroke="#ff0000" stroke-width="2.3"/>
<rect x="0" y="0" width="1279" height="0.9" fill="#e6e6e6"/>
<rect x="0" y="0.9" width="1279" height="1" fill="#b9b9b9"/>
<rect x="0" y="0" width="2.3" height="426.6" fill="#e7e7e8"/>
<rect x="2.3" y="1.2" width="0.8" height="425.4" fill="#b4b4b4"/>
<rect x="0" y="30" width="1.1" height="6" fill="#6a6a92"/>
<rect x="0" y="92.5" width="1.1" height="7.5" fill="#6a6a92"/>
<rect x="623.5" y="0.9" width="1.3" height="429.1" fill="#efefef"/>
<rect x="624.8" y="0.9" width="1.2" height="429.1" fill="#a4a4a4"/>
<rect x="621.8" y="301" width="1.8" height="28.5" fill="#c9c9c9"/>
<line x1="626" y1="14.45" x2="1279" y2="14.45" stroke="#45457b" stroke-width="1.15"/>
<text x="637.5" y="9.7" font-size="7.7" fill="#3c3c72">600</text>
<line x1="643.29" y1="11.7" x2="643.29" y2="14.4" stroke="#45457b" stroke-width="0.95"/>
<line x1="650.98" y1="9.1" x2="650.98" y2="14.4" stroke="#45457b" stroke-width="0.95"/>
<line x1="658.67" y1="11.7" x2="658.67" y2="14.4" stroke="#45457b" stroke-width="0.95"/>
<line x1="666.36" y1="9.1" x2="666.36" y2="14.4" stroke="#45457b" stroke-width="0.95"/>
<line x1="674.05" y1="11.7" x2="674.05" y2="14.4" stroke="#45457b" stroke-width="0.95"/>
<line x1="681.74" y1="9.1" x2="681.74" y2="14.4" stroke="#45457b" stroke-width="0.95"/>
<line x1="689.43" y1="11.7" x2="689.43" y2="14.4" stroke="#45457b" stroke-width="0.95"/>
<line x1="697.12" y1="9.1" x2="697.12" y2="14.4" stroke="#45457b" stroke-width="0.95"/>
<line x1="704.81" y1="11.7" x2="704.81" y2="14.4" stroke="#45457b" stroke-width="0.95"/>
<text x="714.4" y="9.7" font-size="7.7" fill="#3c3c72">700</text>
<line x1="712.5" y1="3.2" x2="712.5" y2="14.4" stroke="#6d6d9c" stroke-width="1.5"/>
<line x1="720.19" y1="11.7" x2="720.19" y2="14.4" stroke="#45457b" stroke-width="0.95"/>
<line x1="727.88" y1="9.1" x2="727.88" y2="14.4" stroke="#45457b" stroke-width="0.95"/>
<line x1="735.57" y1="11.7" x2="735.57" y2="14.4" stroke="#45457b" stroke-width="0.95"/>
<line x1="743.26" y1="9.1" x2="743.26" y2="14.4" stroke="#45457b" stroke-width="0.95"/>
<line x1="750.95" y1="11.7" x2="750.95" y2="14.4" stroke="#45457b" stroke-width="0.95"/>
<line x1="758.64" y1="9.1" x2="758.64" y2="14.4" stroke="#45457b" stroke-width="0.95"/>
<line x1="766.33" y1="11.7" x2="766.33" y2="14.4" stroke="#45457b" stroke-width="0.95"/>
<line x1="774.02" y1="9.1" x2="774.02" y2="14.4" stroke="#45457b" stroke-width="0.95"/>
<line x1="781.71" y1="11.7" x2="781.71" y2="14.4" stroke="#45457b" stroke-width="0.95"/>
<text x="791.3" y="9.7" font-size="7.7" fill="#3c3c72">800</text>
<line x1="789.4" y1="3.2" x2="789.4" y2="14.4" stroke="#6d6d9c" stroke-width="1.5"/>
<line x1="797.09" y1="11.7" x2="797.09" y2="14.4" stroke="#45457b" stroke-width="0.95"/>
<line x1="804.78" y1="9.1" x2="804.78" y2="14.4" stroke="#45457b" stroke-width="0.95"/>
<line x1="812.47" y1="11.7" x2="812.47" y2="14.4" stroke="#45457b" stroke-width="0.95"/>
<line x1="820.16" y1="9.1" x2="820.16" y2="14.4" stroke="#45457b" stroke-width="0.95"/>
<line x1="827.85" y1="11.7" x2="827.85" y2="14.4" stroke="#45457b" stroke-width="0.95"/>
<line x1="835.54" y1="9.1" x2="835.54" y2="14.4" stroke="#45457b" stroke-width="0.95"/>
<line x1="843.23" y1="11.7" x2="843.23" y2="14.4" stroke="#45457b" stroke-width="0.95"/>
<line x1="850.92" y1="9.1" x2="850.92" y2="14.4" stroke="#45457b" stroke-width="0.95"/>
<line x1="858.61" y1="11.7" x2="858.61" y2="14.4" stroke="#45457b" stroke-width="0.95"/>
<text x="868.2" y="9.7" font-size="7.7" fill="#3c3c72">900</text>
<line x1="866.3" y1="3.2" x2="866.3" y2="14.4" stroke="#6d6d9c" stroke-width="1.5"/>
<line x1="873.99" y1="11.7" x2="873.99" y2="14.4" stroke="#45457b" stroke-width="0.95"/>
<line x1="881.68" y1="9.1" x2="881.68" y2="14.4" stroke="#45457b" stroke-width="0.95"/>
<line x1="889.37" y1="11.7" x2="889.37" y2="14.4" stroke="#45457b" stroke-width="0.95"/>
<line x1="897.06" y1="9.1" x2="897.06" y2="14.4" stroke="#45457b" stroke-width="0.95"/>
<line x1="904.75" y1="11.7" x2="904.75" y2="14.4" stroke="#45457b" stroke-width="0.95"/>
<line x1="912.44" y1="9.1" x2="912.44" y2="14.4" stroke="#45457b" stroke-width="0.95"/>
<line x1="920.13" y1="11.7" x2="920.13" y2="14.4" stroke="#45457b" stroke-width="0.95"/>
<line x1="927.82" y1="9.1" x2="927.82" y2="14.4" stroke="#45457b" stroke-width="0.95"/>
<line x1="935.51" y1="11.7" x2="935.51" y2="14.4" stroke="#45457b" stroke-width="0.95"/>
<text x="945.1" y="9.7" font-size="7.7" fill="#3c3c72">1000</text>
<line x1="943.2" y1="3.2" x2="943.2" y2="14.4" stroke="#6d6d9c" stroke-width="1.5"/>
<line x1="950.89" y1="11.7" x2="950.89" y2="14.4" stroke="#45457b" stroke-width="0.95"/>
<line x1="958.58" y1="9.1" x2="958.58" y2="14.4" stroke="#45457b" stroke-width="0.95"/>
<line x1="966.27" y1="11.7" x2="966.27" y2="14.4" stroke="#45457b" stroke-width="0.95"/>
<line x1="973.96" y1="9.1" x2="973.96" y2="14.4" stroke="#45457b" stroke-width="0.95"/>
<line x1="981.65" y1="11.7" x2="981.65" y2="14.4" stroke="#45457b" stroke-width="0.95"/>
<line x1="989.34" y1="9.1" x2="989.34" y2="14.4" stroke="#45457b" stroke-width="0.95"/>
<line x1="997.03" y1="11.7" x2="997.03" y2="14.4" stroke="#45457b" stroke-width="0.95"/>
<line x1="1004.72" y1="9.1" x2="1004.72" y2="14.4" stroke="#45457b" stroke-width="0.95"/>
<line x1="1012.41" y1="11.7" x2="1012.41" y2="14.4" stroke="#45457b" stroke-width="0.95"/>
<text x="1022" y="9.7" font-size="7.7" fill="#3c3c72">1100</text>
<line x1="1020.1" y1="3.2" x2="1020.1" y2="14.4" stroke="#6d6d9c" stroke-width="1.5"/>
<line x1="1027.79" y1="11.7" x2="1027.79" y2="14.4" stroke="#45457b" stroke-width="0.95"/>
<line x1="1035.48" y1="9.1" x2="1035.48" y2="14.4" stroke="#45457b" stroke-width="0.95"/>
<line x1="1043.17" y1="11.7" x2="1043.17" y2="14.4" stroke="#45457b" stroke-width="0.95"/>
<line x1="1050.86" y1="9.1" x2="1050.86" y2="14.4" stroke="#45457b" stroke-width="0.95"/>
<line x1="1058.55" y1="11.7" x2="1058.55" y2="14.4" stroke="#45457b" stroke-width="0.95"/>
<line x1="1066.24" y1="9.1" x2="1066.24" y2="14.4" stroke="#45457b" stroke-width="0.95"/>
<line x1="1073.93" y1="11.7" x2="1073.93" y2="14.4" stroke="#45457b" stroke-width="0.95"/>
<line x1="1081.62" y1="9.1" x2="1081.62" y2="14.4" stroke="#45457b" stroke-width="0.95"/>
<line x1="1089.31" y1="11.7" x2="1089.31" y2="14.4" stroke="#45457b" stroke-width="0.95"/>
<text x="1098.9" y="9.7" font-size="7.7" fill="#3c3c72">1200</text>
<line x1="1097" y1="3.2" x2="1097" y2="14.4" stroke="#6d6d9c" stroke-width="1.5"/>
<line x1="1104.69" y1="11.7" x2="1104.69" y2="14.4" stroke="#45457b" stroke-width="0.95"/>
<line x1="1112.38" y1="9.1" x2="1112.38" y2="14.4" stroke="#45457b" stroke-width="0.95"/>
<line x1="1120.07" y1="11.7" x2="1120.07" y2="14.4" stroke="#45457b" stroke-width="0.95"/>
<line x1="1127.76" y1="9.1" x2="1127.76" y2="14.4" stroke="#45457b" stroke-width="0.95"/>
<line x1="1135.45" y1="11.7" x2="1135.45" y2="14.4" stroke="#45457b" stroke-width="0.95"/>
<line x1="1143.14" y1="9.1" x2="1143.14" y2="14.4" stroke="#45457b" stroke-width="0.95"/>
<line x1="1150.83" y1="11.7" x2="1150.83" y2="14.4" stroke="#45457b" stroke-width="0.95"/>
<line x1="1158.52" y1="9.1" x2="1158.52" y2="14.4" stroke="#45457b" stroke-width="0.95"/>
<line x1="1166.21" y1="11.7" x2="1166.21" y2="14.4" stroke="#45457b" stroke-width="0.95"/>
<text x="1175.8" y="9.7" font-size="7.7" fill="#3c3c72">1300</text>
<line x1="1173.9" y1="3.2" x2="1173.9" y2="14.4" stroke="#6d6d9c" stroke-width="1.5"/>
<line x1="1181.59" y1="11.7" x2="1181.59" y2="14.4" stroke="#45457b" stroke-width="0.95"/>
<line x1="1189.28" y1="9.1" x2="1189.28" y2="14.4" stroke="#45457b" stroke-width="0.95"/>
<line x1="1196.97" y1="11.7" x2="1196.97" y2="14.4" stroke="#45457b" stroke-width="0.95"/>
<line x1="1204.66" y1="9.1" x2="1204.66" y2="14.4" stroke="#45457b" stroke-width="0.95"/>
<line x1="1212.35" y1="11.7" x2="1212.35" y2="14.4" stroke="#45457b" stroke-width="0.95"/>
<line x1="1220.04" y1="9.1" x2="1220.04" y2="14.4" stroke="#45457b" stroke-width="0.95"/>
<line x1="1227.73" y1="11.7" x2="1227.73" y2="14.4" stroke="#45457b" stroke-width="0.95"/>
<line x1="1235.42" y1="9.1" x2="1235.42" y2="14.4" stroke="#45457b" stroke-width="0.95"/>
<line x1="1243.11" y1="11.7" x2="1243.11" y2="14.4" stroke="#45457b" stroke-width="0.95"/>
<text x="1252.7" y="9.7" font-size="7.7" fill="#3c3c72">1400</text>
<line x1="1250.8" y1="3.2" x2="1250.8" y2="14.4" stroke="#6d6d9c" stroke-width="1.5"/>
<line x1="1258.49" y1="11.7" x2="1258.49" y2="14.4" stroke="#45457b" stroke-width="0.95"/>
<line x1="1266.18" y1="9.1" x2="1266.18" y2="14.4" stroke="#45457b" stroke-width="0.95"/>
<line x1="1273.87" y1="11.7" x2="1273.87" y2="14.4" stroke="#45457b" stroke-width="0.95"/>
<line x1="638.5" y1="14.4" x2="638.5" y2="430" stroke="#55558a" stroke-width="1.05"/>
<line x1="635.6" y1="15.67" x2="638.5" y2="15.67" stroke="#45457b" stroke-width="0.95"/>
<line x1="633.6" y1="34.86" x2="638.5" y2="34.86" stroke="#45457b" stroke-width="0.95"/>
<line x1="635.6" y1="54.05" x2="638.5" y2="54.05" stroke="#45457b" stroke-width="0.95"/>
<line x1="633.6" y1="73.24" x2="638.5" y2="73.24" stroke="#45457b" stroke-width="0.95"/>
<line x1="635.6" y1="92.43" x2="638.5" y2="92.43" stroke="#45457b" stroke-width="0.95"/>
<line x1="633.6" y1="111.62" x2="638.5" y2="111.62" stroke="#45457b" stroke-width="0.95"/>
<line x1="635.6" y1="130.81" x2="638.5" y2="130.81" stroke="#45457b" stroke-width="0.95"/>
<line x1="628.1" y1="150" x2="638.5" y2="150" stroke="#45457b" stroke-width="0.95"/>
<line x1="628.5" y1="150" x2="628.5" y2="151.8" stroke="#45457b" stroke-width="0.8"/>
<text transform="translate(627.6,153.4) rotate(90)" font-size="8.3" fill="#3c3c72">500</text>
<line x1="635.6" y1="169.19" x2="638.5" y2="169.19" stroke="#45457b" stroke-width="0.95"/>
<line x1="633.6" y1="188.38" x2="638.5" y2="188.38" stroke="#45457b" stroke-width="0.95"/>
<line x1="635.6" y1="207.57" x2="638.5" y2="207.57" stroke="#45457b" stroke-width="0.95"/>
<line x1="633.6" y1="226.76" x2="638.5" y2="226.76" stroke="#45457b" stroke-width="0.95"/>
<line x1="635.6" y1="245.95" x2="638.5" y2="245.95" stroke="#45457b" stroke-width="0.95"/>
<line x1="633.6" y1="265.14" x2="638.5" y2="265.14" stroke="#45457b" stroke-width="0.95"/>
<line x1="635.6" y1="284.33" x2="638.5" y2="284.33" stroke="#45457b" stroke-width="0.95"/>
<line x1="633.6" y1="303.52" x2="638.5" y2="303.52" stroke="#45457b" stroke-width="0.95"/>
<line x1="635.6" y1="322.71" x2="638.5" y2="322.71" stroke="#45457b" stroke-width="0.95"/>
<line x1="628.1" y1="341.9" x2="638.5" y2="341.9" stroke="#45457b" stroke-width="0.95"/>
<line x1="628.5" y1="341.9" x2="628.5" y2="343.7" stroke="#45457b" stroke-width="0.8"/>
<text transform="translate(627.6,345.3) rotate(90)" font-size="8.3" fill="#3c3c72">750</text>
<line x1="635.6" y1="361.09" x2="638.5" y2="361.09" stroke="#45457b" stroke-width="0.95"/>
<line x1="633.6" y1="380.28" x2="638.5" y2="380.28" stroke="#45457b" stroke-width="0.95"/>
<line x1="635.6" y1="399.47" x2="638.5" y2="399.47" stroke="#45457b" stroke-width="0.95"/>
<line x1="633.6" y1="418.66" x2="638.5" y2="418.66" stroke="#45457b" stroke-width="0.95"/>
<rect x="626" y="1.9" width="12" height="11.9" fill="#ffffff"/>
<line x1="632.4" y1="3" x2="632.4" y2="14.6" stroke="#45457b" stroke-width="1" stroke-dasharray="2.3 2.1"/>
<line x1="627" y1="8.5" x2="639" y2="8.5" stroke="#45457b" stroke-width="1" stroke-dasharray="2.8 1.6"/>
<line x1="638.6" y1="3" x2="638.6" y2="14.4" stroke="#45457b" stroke-width="1.1" stroke-dasharray="3.2 1.2"/>
<line x1="627" y1="14.45" x2="638.6" y2="14.45" stroke="#45457b" stroke-width="1.15" stroke-dasharray="4 1.3"/>
<rect x="665.1" y="41.1" width="494.6" height="278" fill="#020d28"/>
<g transform="translate(665.1,41.1)" filter="url(#soft)"><use href="#dash"/><use href="#curves"/></g>
</svg>
</body></html>
